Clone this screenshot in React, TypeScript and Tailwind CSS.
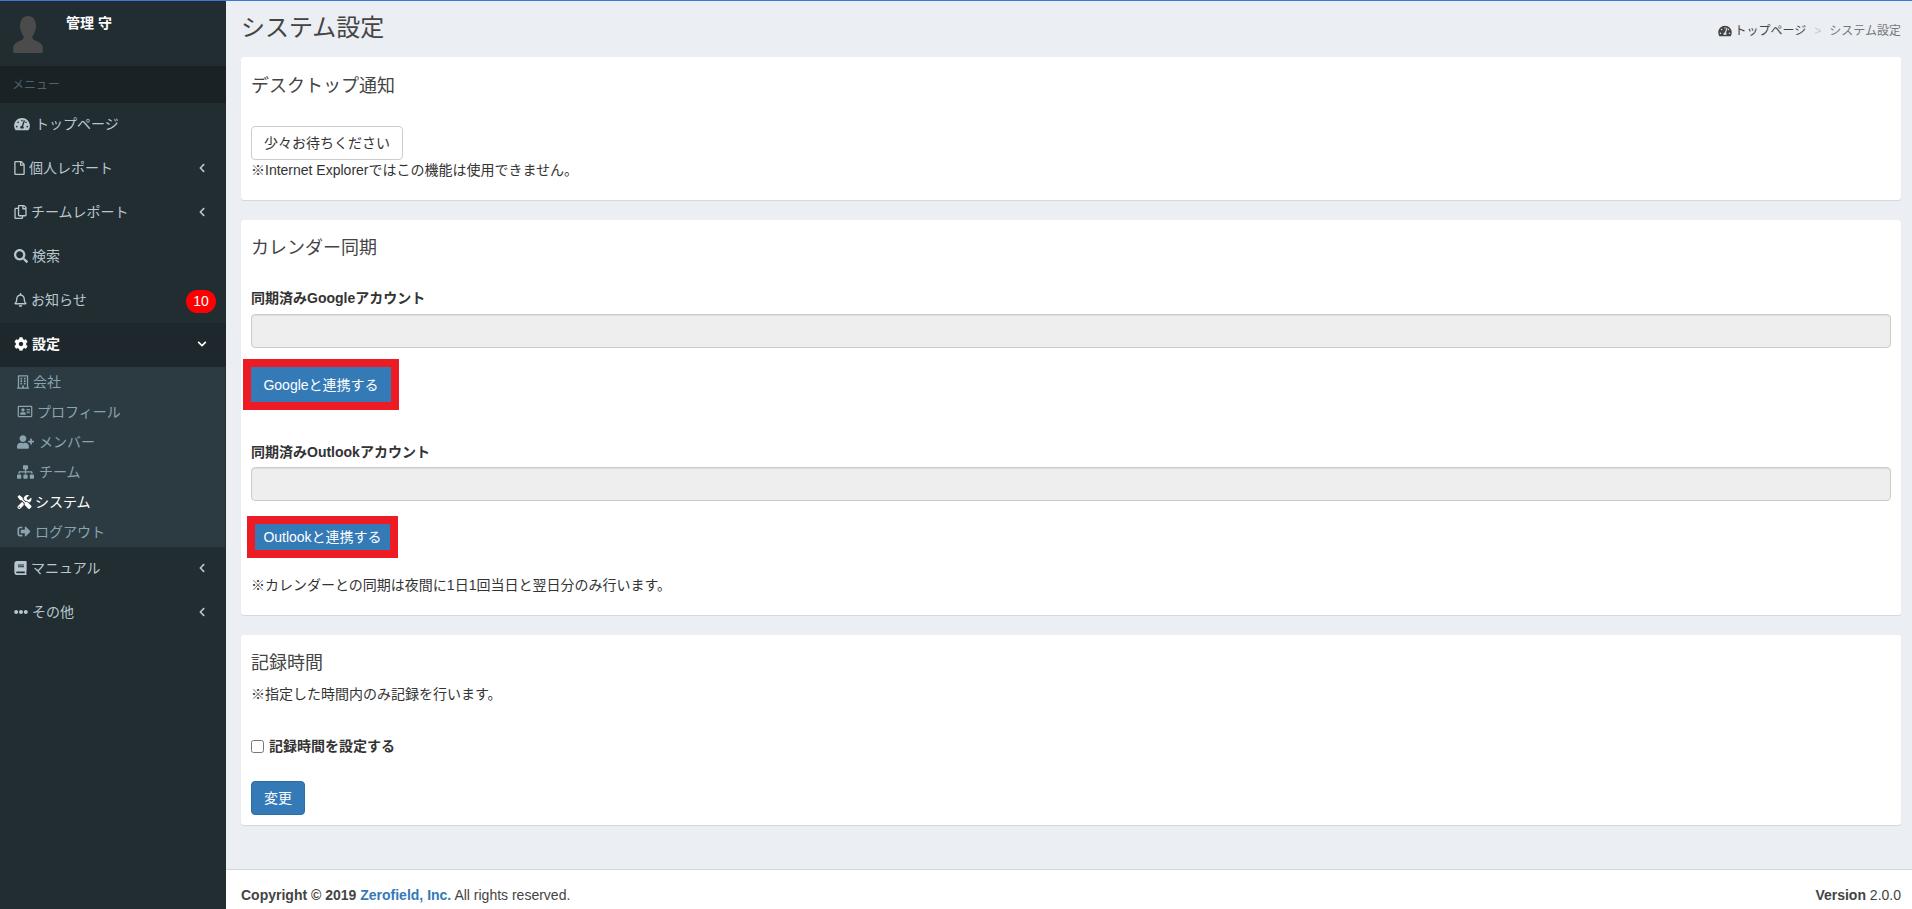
import type { ReactNode } from "react";
import {
  FaBook,
  FaChevronDown,
  FaChevronLeft,
  FaCog,
  FaEllipsisH,
  FaRegAddressCard,
  FaRegBell,
  FaRegBuilding,
  FaRegCopy,
  FaRegFile,
  FaSearch,
  FaSignOutAlt,
  FaSitemap,
  FaTachometerAlt,
  FaTools,
  FaUserPlus,
} from "react-icons/fa";

function MenuItem({ icon, label, arrow, badge, gap }: { icon: ReactNode; label: string; arrow?: boolean; badge?: string; gap: string }) {
  return (
    <a className={`flex h-[44px] items-center pb-[2px] pl-[14px] text-[#b8c7ce] ${gap}`}>
      {icon}
      <span>{label}</span>
      {arrow && <FaChevronLeft className="ml-auto mr-[20px] h-[10px] w-[8px]" />}
      {badge && (
        <span className="ml-auto mr-[10px] mt-[2px] flex h-[23px] w-[30px] items-center justify-center rounded-full bg-[#ff0000] text-[14px] text-white">
          {badge}
        </span>
      )}
    </a>
  );
}

function SubItem({ icon, label, gap, active }: { icon: ReactNode; label: string; gap: string; active?: boolean }) {
  return (
    <a className={`flex h-[30px] items-center pb-px pl-[17px] ${gap} ${active ? "text-white" : "text-[#8aa4af]"}`}>
      {icon}
      <span>{label}</span>
    </a>
  );
}

function Sidebar() {
  return (
    <aside className="w-[226px] shrink-0 bg-[#222d32]">
      <div className="flex h-[65px] items-start pl-[13px]">
        <svg viewBox="0 0 30 37" className="mt-[15px] h-[37px] w-[30px] blur-[0.5px]">
          <path
            d="M15 0c5 0 8 4 8 10 0 4-1.500 7-3.500 10-.5 2 0 3 2.500 4.500 3 1.500 7.500 2.500 8 7.500l-.5 5H.5L0 32c.5-5 5-6 8-7.500 2.500-1.500 3-2.500 2.500-4.500C8.500 17 7 14 7 10 7 4 10 0 15 0z"
            fill="#4b4b4b"
          />
        </svg>
        <p className="ml-[23px] mt-[12px] text-[14px] font-bold leading-[20px] text-white">管理 守</p>
      </div>
      <div className="flex h-[37px] items-center bg-[#1a2226] pl-[12px] text-[12px] text-[#4b646f]">メニュー</div>
      <MenuItem gap="gap-[5px]" label="トップページ" icon={<FaTachometerAlt className="h-[14px] w-[16px]" />} />
      <MenuItem gap="gap-[4px]" label="個人レポート" arrow icon={<FaRegFile className="h-[14px] w-[11px]" />} />
      <MenuItem gap="gap-[4px]" label="チームレポート" arrow icon={<FaRegCopy className="h-[14px] w-[13px]" />} />
      <MenuItem gap="gap-[4px]" label="検索" icon={<FaSearch className="h-[14px] w-[14px]" />} />
      <MenuItem gap="gap-[4px]" label="お知らせ" badge="10" icon={<FaRegBell className="h-[14px] w-[13px]" />} />
      <a className="flex h-[44px] items-center gap-[4px] bg-[#1e282c] pb-[2px] pl-[14px] font-bold text-white">
        <FaCog className="h-[14px] w-[14px]" />
        <span>設定</span>
        <FaChevronDown className="ml-auto mr-[19px] h-[10px] w-[10px]" />
      </a>
      <div className="mr-px bg-[#2c3b41]">
        <SubItem gap="gap-[4px]" label="会社" icon={<FaRegBuilding className="h-[14px] w-[12px]" />} />
        <SubItem gap="gap-[4px]" label="プロフィール" icon={<FaRegAddressCard className="h-[13px] w-[16px]" />} />
        <SubItem gap="gap-[5px]" label="メンバー" icon={<FaUserPlus className="h-[14px] w-[17px]" />} />
        <SubItem gap="gap-[5px]" label="チーム" icon={<FaSitemap className="h-[14px] w-[17px]" />} />
        <SubItem gap="gap-[3px]" label="システム" active icon={<FaTools className="h-[14px] w-[15px]" />} />
        <SubItem gap="gap-[4px]" label="ログアウト" icon={<FaSignOutAlt className="h-[13px] w-[14px]" />} />
      </div>
      <MenuItem gap="gap-[4px]" label="マニュアル" arrow icon={<FaBook className="h-[14px] w-[13px]" />} />
      <MenuItem gap="gap-[4px]" label="その他" arrow icon={<FaEllipsisH className="h-[14px] w-[14px]" />} />
    </aside>
  );
}

function PrimaryButton({ children, className }: { children: ReactNode; className: string }) {
  return (
    <button className={`flex items-center justify-center bg-[#337ab7] text-white ${className}`}>
      {children}
    </button>
  );
}

function SyncedInput({ className }: { className: string }) {
  return (
    <input
      disabled
      className={`block h-[34px] w-full rounded-[4px] border border-[#ccc] bg-[#eee] shadow-[inset_0_1px_1px_rgba(0,0,0,0.075)] ${className}`}
    />
  );
}

function Card({ children, className }: { children: ReactNode; className: string }) {
  return <section className={`rounded-[3px] bg-white px-[10px] shadow-[0_1px_1px_rgba(0,0,0,0.1)] ${className}`}>{children}</section>;
}

export default function App() {
  return (
    <div
      className="flex min-h-screen border-t border-[#3c78d8] bg-[#ebeef3] text-[14px] leading-[20px] text-[#333]"
      style={{ fontFamily: '"Liberation Sans", "Noto Sans CJK JP", sans-serif' }}
    >
      <Sidebar />
      <div className="flex min-w-0 flex-1 flex-col">
        <main className="flex-1 pl-[15px] pr-[11px]">
          <header className="flex h-[56px] items-center justify-between">
            <h1 className="-mt-[2px] text-[24px] font-normal leading-[28px] text-[#444]">システム設定</h1>
            <ol className="mt-[4px] flex items-center text-[12px] text-[#444]">
              <li className="flex items-center gap-[3px]">
                <FaTachometerAlt className="h-[12px] w-[14px]" />
                トップページ
              </li>
              <li className="px-[8px] text-[#ccc]">&gt;</li>
              <li className="text-[#777]">システム設定</li>
            </ol>
          </header>

          <Card className="mb-[20px] pb-[20px] pt-[19px]">
            <h3 className="text-[18px] font-normal leading-[20px] text-[#444]">デスクトップ通知</h3>
            <button className="mt-[30px] block h-[34px] w-[152px] rounded-[4px] border border-[#ccc] bg-white text-center">少々お待ちください</button>
            <p>※Internet Explorerではこの機能は使用できません。</p>
          </Card>

          <Card className="mb-[20px] pb-[20px] pt-[18px]">
            <h3 className="text-[18px] font-normal leading-[20px] text-[#444]">カレンダー同期</h3>
            <label className="mt-[30px] block font-bold">同期済みGoogleアカウント</label>
            <SyncedInput className="mt-[6px]" />
            <PrimaryButton className="mt-[19px] h-[35px] w-[140px] outline-8 outline-[#ed1c24]">Googleと連携する</PrimaryButton>
            <label className="mt-[40px] block font-bold">同期済みOutlookアカウント</label>
            <SyncedInput className="mt-[5px]" />
            <PrimaryButton className="ml-[4px] mt-[23px] h-[26px] w-[135px] outline-8 outline-[#ed1c24]">Outlookと連携する</PrimaryButton>
            <p className="mt-[25px]">※カレンダーとの同期は夜間に1日1回当日と翌日分のみ行います。</p>
          </Card>

          <Card className="pb-[10px] pt-[18px]">
            <h3 className="text-[18px] font-normal leading-[20px] text-[#444]">記録時間</h3>
            <p className="mt-[11px]">※指定した時間内のみ記録を行います。</p>
            <label className="mt-[32px] flex items-center font-bold">
              <input type="checkbox" className="mr-[5px] h-[13px] w-[13px]" />
              記録時間を設定する
            </label>
            <PrimaryButton className="mt-[25px] h-[34px] w-[54px] rounded-[4px] border border-[#2e6da4]">変更</PrimaryButton>
          </Card>
        </main>

        <footer className="mt-[44px] h-[40px] overflow-hidden border-t border-[#d2d6de] bg-white pl-[15px] pr-[11px] pt-[15px] text-[#444]">
          <div className="flex justify-between">
            <p>
              <strong>
                Copyright © 2019 <a className="text-[#337ab7]">Zerofield, Inc.</a>
              </strong>{" "}
              All rights reserved.
            </p>
            <p>
              <b>Version</b> 2.0.0
            </p>
          </div>
        </footer>
      </div>
    </div>
  );
}
